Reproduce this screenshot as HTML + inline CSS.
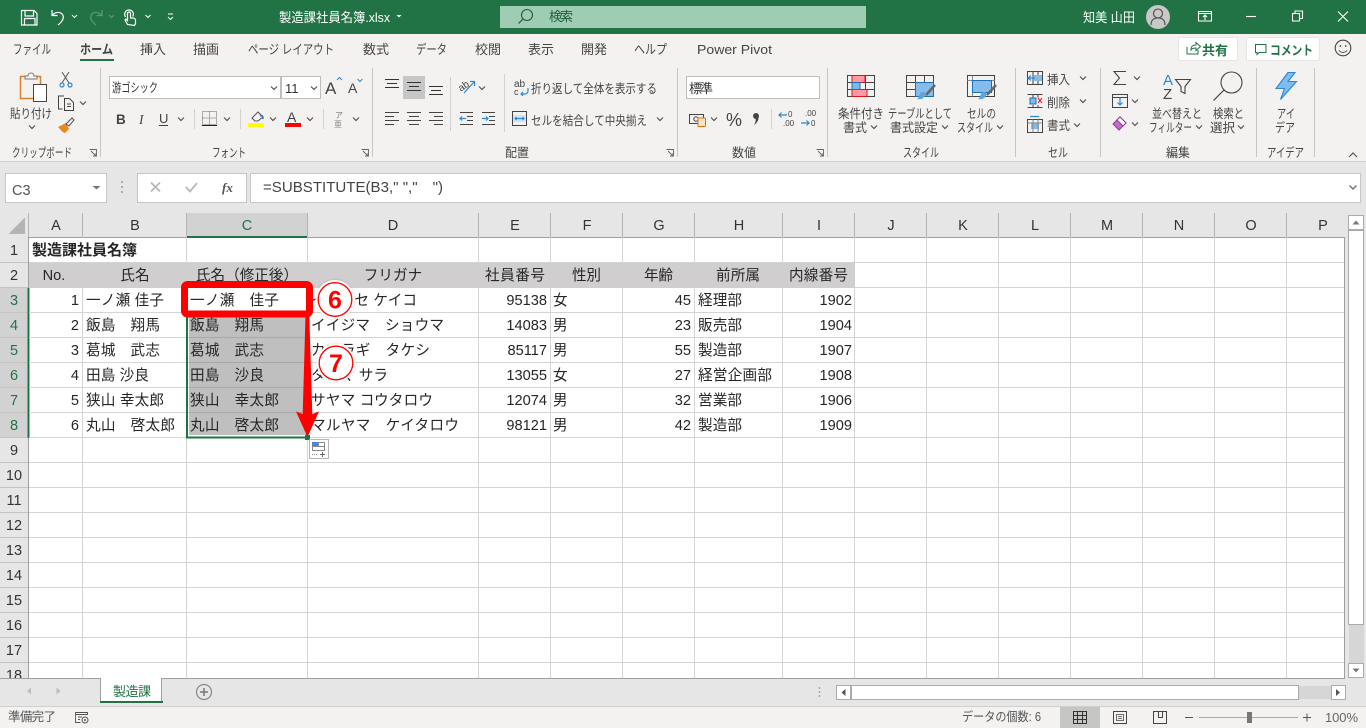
<!DOCTYPE html>
<html lang="ja"><head><meta charset="utf-8"><title>製造課社員名簿.xlsx</title>
<style>
html,body{margin:0;padding:0;width:1366px;height:728px;overflow:hidden;background:#fff}
svg{display:block}
text{font-family:"Liberation Sans","Noto Sans CJK JP",sans-serif;white-space:pre;fill:#444;font-size:12.5px}
.t{font-size:13px;fill:#444}
.w{fill:#fff}
.c text,text.c{font-size:14.6px;fill:#262626}
.b{font-weight:bold}
.m{text-anchor:middle}
.e{text-anchor:end}
.h{font-size:14.5px;fill:#333;text-anchor:middle}
.g{fill:#217346}
.s{fill:none;stroke:#444;stroke-width:1}
.ch{fill:none;stroke:#555;stroke-width:1.2}
.bl{fill:none;stroke:#2b88d8;stroke-width:1.2}
</style></head><body>
<svg width="1366" height="728" viewBox="0 0 1366 728" xmlns="http://www.w3.org/2000/svg">
<!-- backgrounds -->
<rect width="1366" height="728" fill="#fff"/>
<rect width="1366" height="34" fill="#217346"/>
<rect y="34" width="1366" height="128" fill="#f3f2f1"/>
<rect y="161" width="1366" height="1" fill="#d2d0ce"/>
<rect y="162" width="1366" height="75" fill="#e6e6e6"/>
<!-- title bar -->
<g fill="none" stroke="#fff" stroke-width="1.2">
<path d="M21.500 10.500h12.500l3 3v11.500h-15.500z M25 10.500v5.500h8.500v-5.500 M24.500 25v-6.500h10.500v6.500"/>
<path d="M52 10v5.500h5.500 M52.500 15c3-3.500 9-3.500 10.500.5c1.200 4-2 7-5 9.500"/>
<path d="M127.500 24.500l-2.500-4.500.8-1 1.700 1.500v-7a1.500 1.500 0 013 0v4.500h2.500a2.500 2.500 0 012.500 2.500v3l-1 2z M125.500 17c-2-3.500 0-7 3.500-7s5.500 3.500 3.700 6.500"/>
<path d="M72 15l2.500 2.500 2.500-2.500 M145.500 15l2.500 2.500 2.500-2.500 M168 14h5 M168 17l2.500 2.500 2.500-2.500" stroke-width="1"/>
</g>
<path d="M102 10v5.500h-5.500 M101.500 15c-3-3.500-9-3.500-10.500.5c-1.200 4 2 7 5 9.500 M109 15l2.500 2.500 2.500-2.500" fill="none" stroke="#5b9a78" stroke-width="1.200"/>
<text x="279" y="22" class="t w" textLength="111" lengthAdjust="spacingAndGlyphs">製造課社員名簿.xlsx</text>
<path d="M396.500 15h5l-2.500 2.500z" fill="#fff"/>
<rect x="500" y="6" width="366" height="22" fill="#9fcdb3"/>
<circle cx="527" cy="15" r="5.500" fill="none" stroke="#1d5e3a" stroke-width="1.100"/><path d="M523 19l-4.500 4.500" stroke="#1d5e3a" stroke-width="1.200"/>
<text x="549" y="21" class="t" style="fill:#1d5e3a" textLength="24">検索</text>
<text x="1083" y="22" class="t w" textLength="52" lengthAdjust="spacingAndGlyphs">知美 山田</text>
<circle cx="1158" cy="17" r="12" fill="#c8c8c8"/>
<circle cx="1158" cy="13.500" r="4.500" fill="none" stroke="#4a4a4a" stroke-width="1.100"/><path d="M1151 25c0-5 3-7 7-7s7 2 7 7" fill="none" stroke="#4a4a4a" stroke-width="1.100"/>
<g fill="none" stroke="#fff" stroke-width="1.100">
<path d="M1198.500 11.500h13v9.500h-13z M1198.500 13.500h13 M1205 20v-4.500 M1203 17l2-2 2 2"/>
<path d="M1246 16.500h10"/>
<path d="M1292.500 13.500h7v7.500h-7z M1295 13.500v-2.500h7.500v7.500h-3"/>
<path d="M1338 11.500l10 10 M1348 11.500l-10 10"/>
</g>
<!-- tabs -->
<g class="t">
<text class="t" x="13" y="54" textLength="38" lengthAdjust="spacingAndGlyphs">ファイル</text>
<text class="t b" x="80" y="54" textLength="33" lengthAdjust="spacingAndGlyphs">ホーム</text>
<text class="t" x="140" y="54" textLength="26">挿入</text>
<text class="t" x="193" y="54" textLength="26">描画</text>
<text class="t" x="248" y="54" textLength="86" lengthAdjust="spacingAndGlyphs">ページ レイアウト</text>
<text class="t" x="363" y="54" textLength="26">数式</text>
<text class="t" x="416" y="54" textLength="31" lengthAdjust="spacingAndGlyphs">データ</text>
<text class="t" x="475" y="54" textLength="26">校閲</text>
<text class="t" x="528" y="54" textLength="26">表示</text>
<text class="t" x="581" y="54" textLength="26">開発</text>
<text class="t" x="634" y="54" textLength="33" lengthAdjust="spacingAndGlyphs">ヘルプ</text>
<text class="t" x="697" y="54" textLength="75" lengthAdjust="spacingAndGlyphs">Power Pivot</text>
</g>
<rect x="80" y="59" width="34" height="2" fill="#217346"/>
<rect x="1178.500" y="37.500" width="59" height="23" rx="2" fill="#fff" stroke="#e6e5e3"/>
<rect x="1246.500" y="37.500" width="73" height="23" rx="2" fill="#fff" stroke="#e6e5e3"/>
<path d="M1187 47v7h11v-4 M1191 50c0-4 2-5 5-5v-2.500l4.500 4-4.500 4v-2.500c-2 0-4 .500-5 2z" fill="none" stroke="#217346" stroke-width="1"/>
<text x="1202" y="55" class="t b g" textLength="26">共有</text>
<path d="M1255.500 44.500h10.500v8h-7l-2 2v-2h-1.500z" fill="none" stroke="#217346" stroke-width="1"/>
<text x="1270" y="55" class="t b g" textLength="43" lengthAdjust="spacingAndGlyphs">コメント</text>
<circle cx="1343" cy="48" r="7.800" fill="none" stroke="#444" stroke-width="1.100"/>
<circle cx="1340.300" cy="46" r=".9" fill="#444"/><circle cx="1345.700" cy="46" r=".9" fill="#444"/><path d="M1339 50.500c2 2.500 6 2.500 8 0" fill="none" stroke="#444"/>
<!-- group separators -->
<path d="M100.500 68v89 M372.500 68v89 M677.500 68v89 M827.500 68v89 M1015.500 68v89 M1100.500 68v89 M1256.500 68v89 M1314.500 68v89" stroke="#c8c6c4"/>
<path d="M194.500 109v20 M240.500 109v20 M323.500 109v20 M450.500 77v54 M504.500 74v58 M771.500 109v20" stroke="#d4d2d0"/>
<!-- group labels -->
<text x="12" y="157" textLength="60" lengthAdjust="spacingAndGlyphs">クリップボード</text>
<text x="212" y="157" textLength="34" lengthAdjust="spacingAndGlyphs">フォント</text>
<text x="505" y="157" textLength="24" lengthAdjust="spacingAndGlyphs">配置</text>
<text x="732" y="157" textLength="24" lengthAdjust="spacingAndGlyphs">数値</text>
<text x="903" y="157" textLength="36" lengthAdjust="spacingAndGlyphs">スタイル</text>
<text x="1048" y="157" textLength="20" lengthAdjust="spacingAndGlyphs">セル</text>
<text x="1166" y="157" textLength="24" lengthAdjust="spacingAndGlyphs">編集</text>
<text x="1267" y="157" textLength="37" lengthAdjust="spacingAndGlyphs">アイデア</text>
<path d="M89.500 149.500h7v7 M91 151l5 5 M93 156h3v-3 M361.500 149.500h7v7 M363 151l5 5 M365 156h3v-3 M666.500 149.500h7v7 M668 151l5 5 M670 156h3v-3 M816.500 149.500h7v7 M818 151l5 5 M820 156h3v-3" fill="none" stroke="#666" stroke-width=".9"/>
<path d="M1349 157l4-4 4 4" class="ch"/>
<!-- clipboard -->
<rect x="20.500" y="76.500" width="20" height="22" fill="#f3f2f1" stroke="#d9822b" stroke-width="1.500"/>
<path d="M25 78v-2h3c0-4 6-4 6 0h3v3H25z" fill="#f3f2f1" stroke="#777"/>
<rect x="33.500" y="84.500" width="13" height="17" fill="#fff" stroke="#444"/>
<text x="10" y="118" textLength="42" lengthAdjust="spacingAndGlyphs">貼り付け</text>
<path d="M62 72l7 11 M69 72l-7 11" stroke="#555" fill="none"/><circle cx="62" cy="85" r="2" fill="none" stroke="#2b88d8" stroke-width="1.200"/><circle cx="70" cy="85" r="2" fill="none" stroke="#2b88d8" stroke-width="1.200"/>
<path d="M64 96h-5.500v13h4 M64.500 98.500h5l4 4v8h-9z M67 104h4 M67 106.500h4" class="s"/>
<path d="M58 127l8-4 3 6-4 4c-2 0-5-4-7-6z" fill="#e98a1f"/><path d="M66 124l6-6 2 2-5 6z" fill="none" stroke="#555"/>
<!-- font -->
<rect x="109.500" y="76.500" width="171" height="22" fill="#fff" stroke="#c0bebc"/>
<rect x="281.500" y="76.500" width="39" height="22" fill="#fff" stroke="#c0bebc"/>
<text x="112" y="92" style="font-size:12.500px;fill:#333" textLength="46" lengthAdjust="spacingAndGlyphs">游ゴシック</text>
<text x="285" y="93" style="font-size:13px;fill:#333">11</text>
<text x="325" y="94" style="font-size:17px">A</text><path d="M337 80l2.500-2.500 2.500 2.500" fill="none" stroke="#2b88d8"/>
<text x="348" y="93" style="font-size:14px">A</text><path d="M357.500 79l2.500 2.500 2.500-2.500" fill="none" stroke="#2b88d8"/>
<text x="116" y="124" class="b" style="font-size:13.500px">B</text>
<text x="139" y="124" style="font-size:13.500px;font-style:italic;font-family:'Liberation Serif',serif">I</text>
<text x="159" y="123" style="font-size:13px">U</text><path d="M159 125.500h9" stroke="#444"/>
<path d="M202.500 111.500h14v13h-14z M209.500 111.500v13 M202.500 118h14" fill="none" stroke="#666" stroke-dasharray="1 1"/><path d="M202 125.500h15" stroke="#222"/>
<path d="M252 118l6-6 5 5-5 4h-3z" fill="none" stroke="#555"/><path d="M260 116c2-1 3 0 3 3" stroke="#2b6cb0" stroke-width="1.500" fill="none"/>
<rect x="248" y="123" width="16" height="4" fill="#ff0"/>
<text x="287" y="122" style="font-size:14px">A</text>
<rect x="285" y="123" width="16" height="4" fill="#f00"/>
<text x="335" y="118" style="font-size:8px;fill:#777">ア</text><text x="334" y="127" style="font-size:8px;fill:#888">亜</text>
<!-- chevrons -->
<path class="ch" d="M271 86.500l3 3 3-3 M311 86.500l3 3 3-3 M29 125.500l3 3 3-3 M80 101.500l3 3 3-3 M178 117.500l3 3 3-3 M224 117.500l3 3 3-3 M270 117.500l3 3 3-3 M307 117.500l3 3 3-3 M353 117.500l3 3 3-3 M479 86.500l3 3 3-3 M657 117.500l3 3 3-3 M810 86.500l3 3 3-3 M711 117.500l3 3 3-3 M871 125.500l3 3 3-3 M942 125.500l3 3 3-3 M997 125.500l3 3 3-3 M1080 76.500l3 3 3-3 M1080 99.500l3 3 3-3 M1074 123.500l3 3 3-3 M1134 76.500l3 3 3-3 M1132 99.500l3 3 3-3 M1132 122.500l3 3 3-3 M1196 125.500l3 3 3-3 M1238 125.500l3 3 3-3"/>
<!-- alignment -->
<rect x="403" y="76" width="22" height="23" fill="#c6c6c6"/>
<path d="M385 79.500h14 M387 83.500h10 M385 87.500h14 M407 82.500h14 M409 86.500h10 M407 90.500h14 M429 86.500h14 M431 90.500h10 M429 94.500h14" stroke="#333" fill="none"/>
<path d="M385 112.500h14 M385 116.500h9 M385 120.500h14 M385 124.500h9 M407 112.500h14 M409 116.500h10 M407 120.500h14 M409 124.500h10 M429 112.500h14 M434 116.500h9 M429 120.500h14 M434 124.500h9" stroke="#444" fill="none"/>
<text x="459" y="90" style="font-size:10px" transform="rotate(-35 463 88)">ab</text><path d="M464 93l10-11 M470 81.500h4.500v4.500" class="bl"/>
<path d="M460 112.500h13 M467 116.500h6 M467 120.500h6 M460 124.500h13 M482 112.500h13 M482 124.500h13 M489 116.500h6 M489 120.500h6" stroke="#444"/>
<path d="M466 118.500h-6 M462 116.500l-2 2 2 2 M482 118.500h6 M486 116.500l2 2-2 2" class="bl"/>
<text x="514" y="87" style="font-size:10px">ab</text><text x="514" y="95" style="font-size:9px">c</text><path d="M528 88v3c0 2-2 3-3 3h-4 M523 92l-2 2 2 2" class="bl"/>
<text x="531" y="93" textLength="126" lengthAdjust="spacingAndGlyphs">折り返して全体を表示する</text>
<rect x="512.500" y="111.500" width="14" height="14" fill="none" stroke="#444"/><rect x="513" y="115" width="13" height="7" fill="#cfe4f7"/><path d="M515 118.500h9 M516.500 117l-1.500 1.500 1.500 1.500 M522.500 117l1.500 1.500-1.500 1.500" class="bl"/>
<text x="531" y="125" textLength="116" lengthAdjust="spacingAndGlyphs">セルを結合して中央揃え</text>
<!-- number -->
<rect x="686.500" y="76.500" width="133" height="22" fill="#fff" stroke="#c0bebc"/>
<text x="689" y="93" style="font-size:13px;fill:#333" textLength="24">標準</text>
<rect x="689.500" y="114.500" width="14" height="9" fill="none" stroke="#444"/><circle cx="696" cy="119" r="2.200" fill="none" stroke="#444"/>
<rect x="698" y="118" width="7.500" height="8.500" rx="1" fill="#fbe3c8" stroke="#d9731a"/>
<text x="726" y="126" style="font-size:18px" textLength="16" lengthAdjust="spacingAndGlyphs">%</text>
<circle cx="756" cy="116" r="3" fill="#444"/><path d="M758.500 116c.5 4-1.500 7-4.500 9 1.500-2.500 2-4.500 1.500-7z" fill="#444"/>
<text x="788" y="117" style="font-size:8px">0</text><text x="783" y="126" style="font-size:8px">.00</text><path d="M779 115h8 M781.500 112.500l-2.500 2.500 2.500 2.500" class="bl"/>
<text x="805" y="116" style="font-size:8px">.00</text><text x="811" y="126" style="font-size:8px">0</text><path d="M801 123h8 M806.500 120.500l2.500 2.500-2.500 2.500" class="bl"/>
<!-- styles -->
<path d="M847.500 75.500h27v21h-27z M847.500 82.500h27 M847.500 89.500h27 M856.500 75.500v21 M865.500 75.500v21" class="s" />
<rect x="852" y="75.500" width="13" height="7" fill="#ff9aa2" stroke="#d9141e"/><rect x="852" y="89.500" width="15" height="7" fill="#ff9aa2" stroke="#d9141e"/><rect x="852" y="82.500" width="8" height="7" fill="#7fb8e8" stroke="#1a6fb5"/>
<path d="M906.500 75.500h27v21h-27z M906.500 82.500h27 M906.500 89.500h27 M915.500 75.500v21 M924.500 75.500v21" class="s"/>
<rect x="915.500" y="82.500" width="18" height="14" fill="#86bce9" stroke="#1a6fb5"/>
<path d="M935 85l-9 10" stroke="#666" stroke-width="2.500"/><path d="M917 99c4 1 7-.5 9-5l-2-2c-3 0-4 1-4.500 3s-1 3-2.500 4z" fill="#5ea5de"/>
<rect x="967.500" y="75.500" width="27" height="21" fill="none" stroke="#444"/><path d="M967.500 80.500h27 M972.500 75.500v21" stroke="#888"/>
<rect x="972.500" y="80.500" width="19" height="12" fill="#86bce9" stroke="#1a6fb5"/>
<path d="M996 85l-9 10" stroke="#666" stroke-width="2.500"/><path d="M978 99c4 1 7-.5 9-5l-2-2c-3 0-4 1-4.500 3s-1 3-2.500 4z" fill="#5ea5de"/>
<text x="838" y="118" textLength="46" lengthAdjust="spacingAndGlyphs">条件付き</text>
<text x="843" y="132" textLength="24" lengthAdjust="spacingAndGlyphs">書式</text>
<text x="888" y="118" textLength="64" lengthAdjust="spacingAndGlyphs">テーブルとして</text>
<text x="890" y="132" textLength="48" lengthAdjust="spacingAndGlyphs">書式設定</text>
<text x="967" y="118" textLength="29" lengthAdjust="spacingAndGlyphs">セルの</text>
<text x="957" y="132" textLength="36" lengthAdjust="spacingAndGlyphs">スタイル</text>
<!-- cells -->
<path d="M1027.500 71.500h15v13h-15z M1027.500 78h15 M1033 71.500v13 M1038 71.500v13" class="s"/><rect x="1034" y="75" width="8" height="6" fill="#86bce9"/><path d="M1035 78h-7 M1031 75.500l-3 2.500 3 2.500" class="bl"/>
<text x="1047" y="84" textLength="23" lengthAdjust="spacingAndGlyphs">挿入</text>
<path d="M1027.500 94.500h15 M1027.500 107.500h15 M1033 94.500v3 M1038 94.500v3 M1033 105v2.500 M1038 105v2.500" class="s"/><rect x="1030" y="98" width="6" height="6" fill="#86bce9" stroke="#1a6fb5"/><path d="M1038 98l4 5 M1042 98l-4 5" stroke="#e33" stroke-width="1.300"/>
<text x="1047" y="107" textLength="23" lengthAdjust="spacingAndGlyphs">削除</text>
<rect x="1027.500" y="119.500" width="15" height="13" fill="none" stroke="#444"/><rect x="1031" y="123" width="8" height="6" fill="#86bce9"/><path d="M1027.500 123h15 M1033 119.500v13 M1038 119.500v13" stroke="#888" fill="none"/><path d="M1030 116.500h9" class="bl"/>
<text x="1047" y="130" textLength="23" lengthAdjust="spacingAndGlyphs">書式</text>
<!-- editing -->
<path d="M1126 71.500h-12l5.500 6.500-5.500 6.500h12" fill="none" stroke="#444" stroke-width="1.100"/>
<rect x="1112.500" y="94.500" width="15" height="13" fill="none" stroke="#444"/><path d="M1112.500 97.500h15" stroke="#444"/><path d="M1120 98v7 M1117.500 102.500l2.500 2.500 2.500-2.500" class="bl"/>
<path d="M1113 124l7-7 6 6-7 7z" fill="#c66bc9" stroke="#8e3d92"/><path d="M1117 120l6 6 3-3-6-6z" fill="#fff" stroke="#8e3d92"/>
<text x="1163" y="85" style="font-size:15px;fill:#2b88d8">A</text><text x="1163" y="99" style="font-size:15px">Z</text>
<path d="M1175.500 79.500h15l-5.500 7v7l-4-2v-5z" fill="none" stroke="#444" stroke-width="1.100"/>
<text x="1152" y="118" textLength="50" lengthAdjust="spacingAndGlyphs">並べ替えと</text>
<text x="1149" y="132" textLength="43" lengthAdjust="spacingAndGlyphs">フィルター</text>
<circle cx="1231.500" cy="82.500" r="10.500" fill="none" stroke="#444" stroke-width="1.100"/><path d="M1224 90l-10.500 10.500" stroke="#444" stroke-width="1.200"/>
<text x="1213" y="118" textLength="31" lengthAdjust="spacingAndGlyphs">検索と</text>
<text x="1210" y="132" textLength="25" lengthAdjust="spacingAndGlyphs">選択</text>
<path d="M1288 72.500l-12 16h8.500l-4 11 16-18h-8.500l7-9z" fill="#7fbcef" stroke="#2b88d8" stroke-width="1.100"/>
<text x="1277" y="118" textLength="18" lengthAdjust="spacingAndGlyphs">アイ</text>
<text x="1275" y="132" textLength="20" lengthAdjust="spacingAndGlyphs">デア</text>
<!-- formula bar -->
<rect x="5.500" y="173.500" width="101" height="29" fill="#fff" stroke="#c6c6c6"/>
<text x="12" y="195" style="font-size:14.500px;fill:#555">C3</text>
<path d="M92.500 186h8l-4 3.500z" fill="#777"/>
<path d="M122 181v2 M122 186v2 M122 191v2" stroke="#999" stroke-width="1.500"/>
<rect x="137.500" y="173.500" width="109" height="29" fill="#fff" stroke="#c6c6c6"/>
<rect x="250.500" y="173.500" width="1110" height="29" fill="#fff" stroke="#c6c6c6"/>
<path d="M151 182.500l9 9 M160 182.500l-9 9" stroke="#b8b8b8" stroke-width="1.800"/>
<path d="M186 187l4 4.500 7-8.500" fill="none" stroke="#b8b8b8" stroke-width="1.800"/>
<text x="222" y="192" style="font-size:13px;font-style:italic;font-weight:bold;font-family:'Liberation Serif',serif;fill:#555">fx</text>
<text x="263" y="192" style="font-size:14.500px;fill:#444" textLength="180" lengthAdjust="spacingAndGlyphs">=SUBSTITUTE(B3," ","　")</text>
<path d="M1349.500 185.500l3.500 3.500 3.500-3.500" fill="none" stroke="#777" stroke-width="1.500"/>
<!-- headers -->
<rect x="0" y="213" width="1345" height="24" fill="#e6e6e6"/>
<rect x="187" y="213" width="120" height="24" fill="#d2d2d2"/>
<rect x="187" y="236" width="121" height="2" fill="#217346"/>
<path d="M8.500 234h16.500v-16.500z" fill="#b4b4b4"/>
<path d="M28.500 213v24 M82.500 213v24 M186.500 213v24 M307.500 213v24 M478.500 213v24 M550.500 213v24 M622.500 213v24 M694.500 213v24 M782.500 213v24 M854.500 213v24 M926.500 213v24 M998.500 213v24 M1070.500 213v24 M1142.500 213v24 M1214.500 213v24 M1286.500 213v24" stroke="#b4b4b4"/>
<path d="M29 237.500h158 M308 237.500h1036" stroke="#9f9f9f"/>
<text class="h" x="56" y="230">A</text><text class="h" x="135" y="230">B</text><text class="h g" style="fill:#217346" x="247" y="230">C</text><text class="h" x="393" y="230">D</text><text class="h" x="515" y="230">E</text><text class="h" x="587" y="230">F</text><text class="h" x="659" y="230">G</text><text class="h" x="739" y="230">H</text><text class="h" x="819" y="230">I</text><text class="h" x="891" y="230">J</text><text class="h" x="963" y="230">K</text><text class="h" x="1035" y="230">L</text><text class="h" x="1107" y="230">M</text><text class="h" x="1179" y="230">N</text><text class="h" x="1251" y="230">O</text><text class="h" x="1323" y="230">P</text>
<!-- row headers -->
<rect x="0" y="237" width="28" height="441" fill="#e6e6e6"/>
<rect x="0" y="288" width="28" height="150" fill="#d2d2d2"/>
<path d="M0 262.500h28 M0 287.500h28 M0 312.500h28 M0 337.500h28 M0 362.500h28 M0 387.500h28 M0 412.500h28 M0 437.500h28 M0 462.500h28 M0 487.500h28 M0 512.500h28 M0 537.500h28 M0 562.500h28 M0 587.500h28 M0 612.500h28 M0 637.500h28 M0 662.500h28" stroke="#c4c4c4"/>
<path d="M28.500 237v441" stroke="#9f9f9f"/>
<rect x="27.500" y="288" width="2" height="150" fill="#217346"/>
<text class="h" x="14" y="255">1</text><text class="h" x="14" y="280">2</text>
<g style="fill:#217346"><text class="h" style="fill:#217346" x="14" y="305">3</text><text class="h" style="fill:#217346" x="14" y="330">4</text><text class="h" style="fill:#217346" x="14" y="355">5</text><text class="h" style="fill:#217346" x="14" y="380">6</text><text class="h" style="fill:#217346" x="14" y="405">7</text><text class="h" style="fill:#217346" x="14" y="430">8</text></g>
<text class="h" x="14" y="455">9</text><text class="h" x="14" y="480">10</text><text class="h" x="14" y="505">11</text><text class="h" x="14" y="530">12</text><text class="h" x="14" y="555">13</text><text class="h" x="14" y="580">14</text><text class="h" x="14" y="605">15</text><text class="h" x="14" y="630">16</text><text class="h" x="14" y="655">17</text><text class="h" x="14" y="680">18</text>
<!-- grid -->
<path d="M82.500 237v441 M186.500 237v441 M307.500 237v441 M478.500 237v441 M550.500 237v441 M622.500 237v441 M694.500 237v441 M782.500 237v441 M854.500 237v441 M926.500 237v441 M998.500 237v441 M1070.500 237v441 M1142.500 237v441 M1214.500 237v441 M1286.500 237v441 M29 262.500h1315 M29 287.500h1315 M29 312.500h1315 M29 337.500h1315 M29 362.500h1315 M29 387.500h1315 M29 412.500h1315 M29 437.500h1315 M29 462.500h1315 M29 487.500h1315 M29 512.500h1315 M29 537.500h1315 M29 562.500h1315 M29 587.500h1315 M29 612.500h1315 M29 637.500h1315 M29 662.500h1315" stroke="#d4d4d4"/>
<path d="M1344.500 237v441" stroke="#9f9f9f"/>
<rect x="29" y="263" width="826" height="25" fill="#d0cece"/>
<rect x="83" y="238" width="103" height="24" fill="#fff"/>
<rect x="29" y="238" width="157" height="24" fill="#fff"/>
<path d="M186.500 237v25 M82.500 262v1" stroke="#d4d4d4"/>
<!-- selection -->
<rect x="189" y="313" width="117" height="122" fill="#bfbfbf"/>
<path d="M189 337.500h117 M189 362.500h117 M189 387.500h117 M189 412.500h117" stroke="#a8a8a8"/>
<rect x="186" y="288" width="2" height="150" fill="#217346"/>
<rect x="186" y="436.500" width="122" height="2" fill="#217346"/>
<rect x="306" y="288" width="2" height="150" fill="#217346"/>
<!-- cells -->
<g class="c">
<text class="b" x="32" y="255" style="font-size:15px" textLength="105">製造課社員名簿</text>
<text class="m" x="54" y="280">No.</text>
<text class="m" x="135" y="280">氏名</text>
<text class="m" x="247" y="280">氏名（修正後）</text>
<text class="m" x="393" y="280">フリガナ</text>
<text x="485" y="280" textLength="60">社員番号</text>
<text x="572" y="280" textLength="29">性別</text>
<text x="644" y="280" textLength="29">年齢</text>
<text x="716" y="280" textLength="44">前所属</text>
<text x="789" y="280" textLength="59">内線番号</text>

<text class="e" x="79" y="305">1</text><text class="e" x="79" y="330">2</text><text class="e" x="79" y="355">3</text><text class="e" x="79" y="380">4</text><text class="e" x="79" y="405">5</text><text class="e" x="79" y="430">6</text>
<text x="86" y="305" textLength="78">一ノ瀬 佳子</text>
<text x="86" y="330" textLength="74">飯島　翔馬</text>
<text x="86" y="355" textLength="74">葛城　武志</text>
<text x="86" y="380" textLength="63">田島 沙良</text>
<text x="86" y="405" textLength="78">狭山 幸太郎</text>
<text x="86" y="430" textLength="89">丸山　啓太郎</text>

<text x="190" y="305" textLength="89">一ノ瀬　佳子</text>
<text x="190" y="330" textLength="74">飯島　翔馬</text>
<text x="190" y="355" textLength="74">葛城　武志</text>
<text x="190" y="380" textLength="74">田島　沙良</text>
<text x="190" y="405" textLength="89">狭山　幸太郎</text>
<text x="190" y="430" textLength="89">丸山　啓太郎</text>

<text x="311" y="305" textLength="106">イチノセ ケイコ</text>
<text x="311" y="330" textLength="133">イイジマ　ショウマ</text>
<text x="311" y="355" textLength="119">カツラギ　タケシ</text>
<text x="311" y="380" textLength="77">タジマ サラ</text>
<text x="311" y="405" textLength="122">サヤマ コウタロウ</text>
<text x="311" y="430" textLength="148">マルヤマ　ケイタロウ</text>

<text class="e" x="547" y="305">95138</text><text class="e" x="547" y="330">14083</text><text class="e" x="547" y="355">85117</text><text class="e" x="547" y="380">13055</text><text class="e" x="547" y="405">12074</text><text class="e" x="547" y="430">98121</text>
<text x="553" y="305">女</text><text x="553" y="330">男</text><text x="553" y="355">男</text><text x="553" y="380">女</text><text x="553" y="405">男</text><text x="553" y="430">男</text>
<text class="e" x="691" y="305">45</text><text class="e" x="691" y="330">23</text><text class="e" x="691" y="355">55</text><text class="e" x="691" y="380">27</text><text class="e" x="691" y="405">32</text><text class="e" x="691" y="430">42</text>
<text x="698" y="305" textLength="44">経理部</text><text x="698" y="330" textLength="44">販売部</text><text x="698" y="355" textLength="44">製造部</text><text x="698" y="380" textLength="74">経営企画部</text><text x="698" y="405" textLength="44">営業部</text><text x="698" y="430" textLength="44">製造部</text>
<text class="e" x="852" y="305">1902</text><text class="e" x="852" y="330">1904</text><text class="e" x="852" y="355">1907</text><text class="e" x="852" y="380">1908</text><text class="e" x="852" y="405">1906</text><text class="e" x="852" y="430">1909</text>
</g>
<!-- fill handle + quick analysis -->
<rect x="305" y="435" width="5" height="5" fill="#217346"/>
<rect x="309.500" y="439.500" width="19" height="19" fill="#fff" stroke="#b5b5b5"/>
<rect x="312.500" y="442.500" width="6" height="4" fill="#4a86e8" stroke="#4a86e8"/><rect x="318.500" y="442.500" width="6" height="4" fill="#fff" stroke="#888"/><rect x="312.500" y="446.500" width="12" height="4" fill="#fff" stroke="#888"/>
<path d="M312 454.500h6" stroke="#888" stroke-dasharray="1 1"/><path d="M320 454.500h5 M322.500 452v5" stroke="#666"/>
<!-- arrow -->
<path d="M305.500 315h3.800l3 99 6.700-2.500-11.500 25.500-11.500-25.500 6.700 2.500z" fill="#f00"/>
<!-- red box -->
<rect x="184.500" y="284.500" width="125" height="29.500" rx="3" fill="none" stroke="#f00" stroke-width="7"/>
<!-- callouts -->
<circle cx="335" cy="299.500" r="21" fill="#000" fill-opacity=".05"/><circle cx="335" cy="299.500" r="19.500" fill="#fff" fill-opacity=".95"/><circle cx="335" cy="299.500" r="16.800" fill="#fff" stroke="#f00" stroke-width="1.300"/>
<text x="335" y="308.500" class="m b" style="font-size:25px;fill:#f00">6</text>
<circle cx="336" cy="363" r="21" fill="#000" fill-opacity=".05"/><circle cx="336" cy="363" r="19.500" fill="#fff" fill-opacity=".95"/><circle cx="336" cy="363" r="16.800" fill="#fff" stroke="#f00" stroke-width="1.300"/>
<text x="336" y="372" class="m b" style="font-size:25px;fill:#f00">7</text>
<!-- vertical scrollbar -->
<rect x="1345" y="213" width="21" height="465" fill="#e6e6e6"/>
<rect x="1348.500" y="215.500" width="15" height="14" fill="#fff" stroke="#ababab"/>
<path d="M1352.500 224.500h7l-3.500-4z" fill="#777"/>
<rect x="1348.500" y="230.500" width="15" height="394" fill="#fff" stroke="#ababab"/>
<rect x="1349" y="625" width="15" height="38" fill="#d6d6d6"/>
<rect x="1348.500" y="663.500" width="15" height="14" fill="#fff" stroke="#ababab"/>
<path d="M1352.500 668.500h7l-3.500 4z" fill="#777"/>
<!-- sheet bar -->
<rect x="0" y="678" width="1366" height="28" fill="#e6e6e6"/>
<rect x="0" y="678" width="1345" height="1" fill="#9f9f9f"/>
<rect x="100.500" y="678.500" width="61" height="23" fill="#fff" stroke="#9f9f9f"/>
<rect x="101" y="678" width="60" height="2" fill="#fff"/>
<rect x="100" y="701" width="63" height="2" fill="#217346"/>
<text x="113" y="696" class="t g" style="fill:#217346" textLength="38">製造課</text>
<path d="M31 687.500v7l-4-3.500z M56.500 687.500v7l4-3.500z" fill="#bdbdbd"/>
<circle cx="204" cy="692" r="7.500" fill="none" stroke="#8a8a8a" stroke-width="1.200"/><path d="M200 692h8 M204 688v8" stroke="#777" stroke-width="1.500"/>
<path d="M819.500 687v2 M819.500 691v2 M819.500 695v2" stroke="#aaa" stroke-width="1.500"/>
<rect x="836.500" y="685.500" width="14" height="14" fill="#fff" stroke="#ababab"/><path d="M845.500 689v7l-4-3.500z" fill="#555"/>
<rect x="851.500" y="685.500" width="447" height="14" fill="#fff" stroke="#ababab"/>
<rect x="1299" y="686" width="32" height="13" fill="#d6d6d6"/>
<rect x="1331.500" y="685.500" width="14" height="14" fill="#fff" stroke="#ababab"/><path d="M1336 689v7l4-3.500z" fill="#555"/>
<!-- status bar -->
<rect x="0" y="706" width="1366" height="22" fill="#f3f2f1"/>
<rect x="0" y="706" width="1366" height="1" fill="#d2d0ce"/>
<text x="8" y="721" style="fill:#555" textLength="48">準備完了</text>
<path d="M75.500 712.500h12v2h-12z M75.500 714.500v8h5 M78 717h4 M78 719.500h2" fill="none" stroke="#555" stroke-width=".9"/><circle cx="85" cy="720" r="3" fill="none" stroke="#555"/><circle cx="85" cy="720" r="1" fill="#555"/>
<text x="962" y="721" style="fill:#555" textLength="79" lengthAdjust="spacingAndGlyphs">データの個数: 6</text>
<rect x="1060" y="707" width="40" height="21" fill="#c6c6c4"/>
<path d="M1073.500 711.500h13v12h-13z M1073.500 715.500h13 M1073.500 719.500h13 M1077.500 711.500v12 M1082.500 711.500v12" fill="none" stroke="#333"/>
<path d="M1113.500 711.500h13v12h-13z" fill="none" stroke="#444"/><path d="M1116.500 714.500h7v6h-7z M1118 716.500h4 M1118 718.500h4" fill="none" stroke="#444" stroke-width=".8"/>
<path d="M1153.500 711.500h13v12h-13z M1158.500 711.500v6h4v-6" fill="none" stroke="#444"/>
<path d="M1185 717.500h8 M1303 717.500h8 M1307 713.500v8" stroke="#555"/>
<path d="M1199 717.500h99" stroke="#aaa"/>
<rect x="1247" y="712" width="5" height="11" fill="#777"/>
<text x="1325" y="722" style="font-size:13px;fill:#666" textLength="33">100%</text>
</svg>
</body></html>
